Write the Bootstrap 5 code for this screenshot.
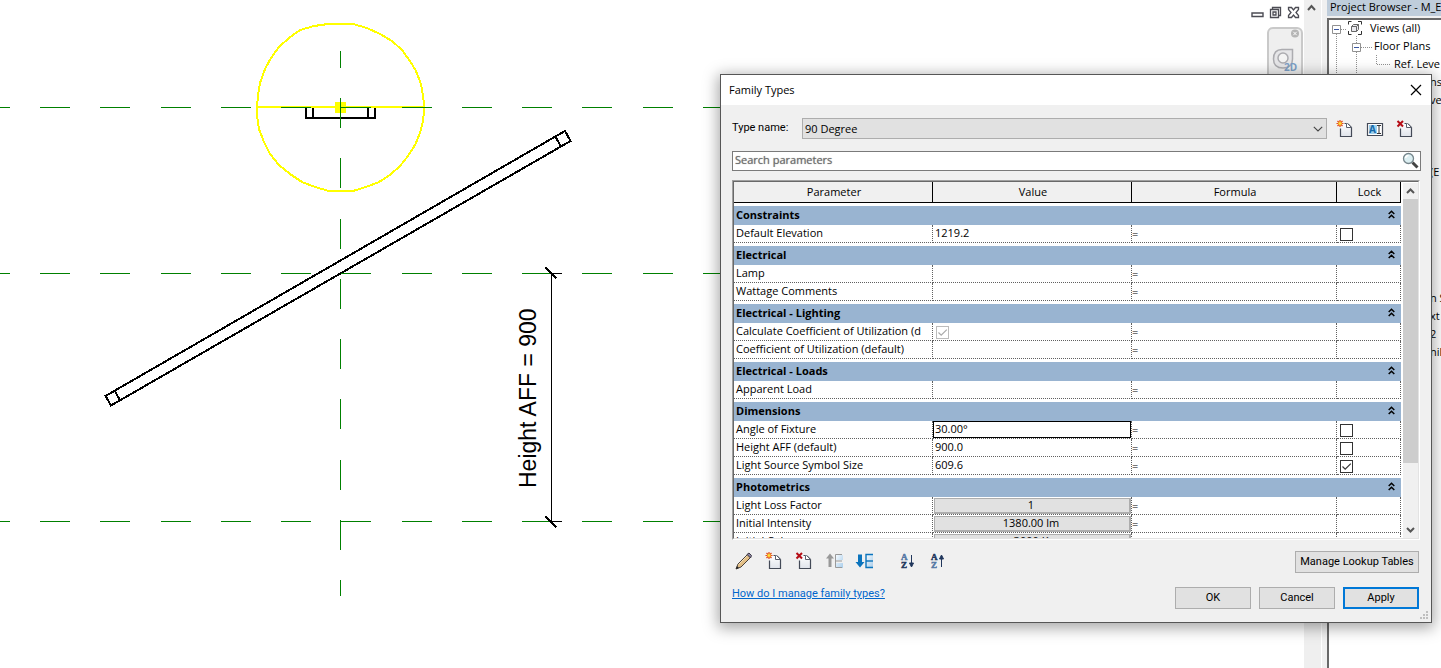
<!DOCTYPE html>
<html lang="en">
<head>
<meta charset="utf-8">
<meta name="viewport" content="width=device-width, initial-scale=1">
<title>Family Types</title>
<link href="https://cdn.jsdelivr.net/npm/bootstrap@5.3.0/dist/css/bootstrap.min.css" rel="stylesheet">
<style>
  body { font-family: "Open Sans", "Noto Sans", sans-serif; font-size: 11px; line-height: 16px; color: #000; background: #fff; }
  svg { display: block; }
  .canvas-tools { top: 0; right: 0; }
  .win-tools { gap: 5px; padding: 6px 4px 0 0; }
  .plain { border: 0; background: none; padding: 0; color: inherit; }
  .nav-widget { width: 36px; height: 60px; margin: 8px 1px 0 auto; border: 2px solid #c9c9c9; border-radius: 6px; background: #efefef; }
  .view-scroll { width: 17px; background: #efefef; }
  .view-scroll button { width: 15px; height: 17px; }
  .browser { width: 120px; padding-left: 5px; background: #f0f0f0; border-left: 1px solid #fff; }
  .browser h2 { font-size: 11px; line-height: 14px; height: 16px; margin: 0 0 2px 0; padding-left: 3px; background: #bfcddb; white-space: nowrap; overflow: hidden; }
  .tree { position: relative; border: 1px solid #696969; border-width: 2px 0 0 2px; background: #fff; white-space: nowrap; }
  .tree li { height: 18px; line-height: 16px; }
  .tree ul { padding: 0; margin: 0; list-style: none; }
  .l1 { padding-left: 17px; } .l2 { padding-left: 45px; } .l3 { padding-left: 65px; } .edge { padding-left: 101px; }
  .tree-lines { position: absolute; left: 0; top: 0; }

  .dlg { position: absolute; top: 74px; right: 9px; width: 712px; border: 1px solid #565656; background: #f0f0f0; box-shadow: 0 3px 14px 2px rgba(0,0,0,.35); }
  .dlg-title { height: 30px; background: #fff; padding: 0 8px; }
  .dlg-title h1 { font-size: 11px; line-height: 30px; margin: 0; }
  .dlg-body { padding: 13px 10px 13px 11px; }
  .dlg .type-row label, .dlg .push, .dlg .foot a { font-family: Roboto, "Open Sans", sans-serif; }
  .type-row label { width: 70px; line-height: 20px; }
  .type-row .form-select { width: 525px; height: 21px; padding: 0 24px 0 2px; font-size: 11px; line-height: 19px; color: #000; border: 1px solid #adadad; border-radius: 0; background-color: #e1e1e1;
    background-image: url("data:image/svg+xml,%3Csvg xmlns='http://www.w3.org/2000/svg' viewBox='0 0 10 6'%3E%3Cpath d='M.8.8 5 5 9.2.8' fill='none' stroke='%23444' stroke-width='1.1'/%3E%3C/svg%3E"); background-size: 10px 6px; background-position: right 3px center; }
  .type-icons { gap: 12px; padding-left: 9px; }
  .find { height: 20px; margin-top: 12px; border: 1px solid #7a7a7a; background: #fff; }
  .find input { border: 0; background: none; padding: 0 2px 3px; height: 18px; font-size: 11px; outline: 0; }
  .find input::placeholder { color: #6d6d6d; opacity: 1; text-shadow: 0 0 1px #8a8a8a; }

  .grid-frame { height: 360px; margin: 9px 1px 0 0; border: 1px solid; border-color: #a0a0a0 #fff #fff #a0a0a0; }
  .grid-inner { border: 1px solid; border-color: #696969 #e3e3e3 #e3e3e3 #696969; background: #fff; }
  .params { width: 667px; table-layout: fixed; border-collapse: separate; border-spacing: 0; }
  .params thead th { height: 21px; padding: 0 0 2px 2px; font-weight: 400; text-align: center; background: #f0f0f0; border-right: 1px solid #000; border-bottom: 1px solid #000; line-height: 17px; }
  .params tbody th { height: 22px; padding: 0 2px 2px; font-weight: 700; line-height: 17px; border-top: 3px solid #fff; background: #99b4d1; color: #000; }
  .params tbody th svg { float: right; margin: 4px 4px 0 0; }
  .params td { height: 18px; padding: 0 2px; line-height: 16px; border-bottom: 1px dotted #606060; border-right: 1px dotted #606060; white-space: nowrap; overflow: hidden; vertical-align: top; }
  .params td:first-child { padding-right: 0; }
  .params td:last-child { padding: 3px 0 0 3px; }
  .params td:nth-child(3) { padding: 1px 0 0 0; }
  .params td.pad-btn { padding: 1px 0 0 1px; }
  .params td.pad-edit { padding: 0; }
  .value-btn { width: 197px; height: 16px; font-size: 11px; line-height: 12px; background: #e1e1e1; border: 1px solid #adadad; border-width: 1px 2px 2px 1px; padding: 0 2px 1px 0; }
  .value-edit { width: 198px; height: 17px; font-size: 11px; border: 1px solid #000; padding: 0 1px 2px; outline: 0; }
  .tick { appearance: none; display: block; width: 13px; height: 13px; margin: 0; border: 1px solid #333; background: #fff; }
  .tick:checked { background: url("data:image/svg+xml,%3Csvg xmlns='http://www.w3.org/2000/svg' viewBox='0 0 11 11'%3E%3Cpath d='M1.5 5.5 4.2 8.2 9.8 2.6' fill='none' stroke='%23333' stroke-width='1.2'/%3E%3C/svg%3E") #fff; }
  .tick:disabled { border-color: #bcbcbc; margin: 3px 0 0 1px; opacity: 1; }
  .tick:disabled:checked { background-image: url("data:image/svg+xml,%3Csvg xmlns='http://www.w3.org/2000/svg' viewBox='0 0 11 11'%3E%3Cpath d='M1.5 5.5 4.2 8.2 9.8 2.6' fill='none' stroke='%23aaa' stroke-width='1.2'/%3E%3C/svg%3E"); }
  .scroller { width: 15px; background: #f0f0f0; margin-top: 1px; }
  .scroller .thumb { height: 264px; width: 15px; background: #cdcdcd; }
  .scroller button { height: 16px; width: 15px; }

  .tools { gap: 10px; height: 22px; margin: 11px 2px 0 2px; }
  .dlg .push { font-size: 11px; line-height: 20px; height: 22px; width: 76px; padding: 0; border: 1px solid #adadad; border-radius: 0; background: #e1e1e1; color: #000; }
  .dlg .push.wide { width: 124px; }
  .dlg .push.default { border: 2px solid #0078d7; line-height: 18px; }
  .foot { margin: 14px 2px 0 0; gap: 8px; }
  .foot a { color: #0066cc; line-height: 13px; align-self: flex-start; }
  .grip { position: absolute; right: 2px; bottom: 2px; }
</style>
</head>
<body>
<svg width="0" height="0" class="position-absolute" aria-hidden="true">
  <defs>
    <linearGradient id="paper" x1="0" y1="0" x2="0" y2="1"><stop offset="0" stop-color="#fff"/><stop offset="1" stop-color="#dfe3ea"/></linearGradient>
    <linearGradient id="cell" x1="0" y1="0" x2="1" y2="1"><stop offset="0" stop-color="#f4faff"/><stop offset="1" stop-color="#a9cdea"/></linearGradient>
    <symbol id="page" viewBox="0 0 18 18"><path d="M4.500 8V16.500H15.500V7.500L12 3.500H8" fill="url(#paper)"/><path d="M4.500 8.500V16.500H15.500V7.500L12 4M8.500 3.500H10.500" fill="none" stroke="#444a57" stroke-width="1.200"/><path d="M10.500 3.500V7.500H15.500L11.500 3.500Z" fill="#fff" stroke="#5a606c"/></symbol>
    <symbol id="new" viewBox="0 0 18 18"><use href="#page" width="18" height="18"/><path d="M4 0V7M.5 3.500H7.500M1.500 1 6.500 6M6.500 1 1.500 6" stroke="#e0431b" stroke-width="1.200"/><circle cx="4" cy="3.500" r="1.800" fill="#ffdf3a" stroke="#f08a1d" stroke-width=".8"/></symbol>
    <symbol id="del" viewBox="0 0 18 18"><use href="#page" width="18" height="18"/><path d="M1.500 1 7 6.500M7 1 1.500 6.500" stroke="#b50d16" stroke-width="2"/></symbol>
    <symbol id="chev2" viewBox="0 0 7 9"><path d="M.7 4 3.500 1.200 6.300 4M.7 8 3.500 5.200 6.300 8" fill="none" stroke="#000" stroke-width="1.500"/></symbol>
  </defs>
</svg>

<main class="position-relative vh-100 overflow-hidden d-flex">
  <section class="position-relative flex-grow-1" aria-label="Elevation view">
    <svg width="100%" height="100%" shape-rendering="crispEdges">
      <g fill="none" stroke="#000" stroke-width="2">
        <path d="M306 108V118H375V108M313 108V118M368 108V118"/>
        <path d="M565 131 570.500 141 111 405.500 105.500 396ZM555.500 137 561 146.500M115 391 120 400.500"/>
      </g>
      <g fill="none" stroke="#ff0" stroke-width="2">
        <path d="M424.500 107 423 121 420 133 415 145 408 156 400 166 390 175 379 182 366 187 353 191H329L315 187 302 182 290 174 279 165 270 154 264 142 259 129 257 115 257 107 258 95 260 83 265 69 271 58 279 47 289 38 300 30 314 26 328 24H353L367 28 380 34 392 41 402 50 410 61 416 71 421 84 423 96Z"/>
        <path d="M256 107H425"/>
      </g>
      <path d="M335 102H346V113H335Z" fill="#ff0"/>
      <g fill="none" stroke="#008000" stroke-dasharray="30 30.250">
        <path d="M-20.250 107.500H760M-20.250 273.500H760M-20.250 521.500H760"/>
        <path d="M340.500 37.750V596"/>
      </g>
      <path d="M340 30H341V51H340Z" fill="#fff"/>
      <g fill="none" stroke="#000">
        <path d="M551.500 273V521M551 273.500H562M551 521.500H562"/>
        <path d="M545.500 267.500 556.500 278.500M545.500 516.500 556.500 527.500" stroke-width="2"/>
      </g>
      <text transform="translate(536 486) rotate(-90)" x="-2" font-family="Liberation Sans, Arial, sans-serif" font-size="23">Height AFF = 900</text>
    </svg>
    <div class="position-absolute canvas-tools">
      <div class="d-flex win-tools">
        <button class="plain" aria-label="Minimize"><svg width="13" height="13" fill="none" stroke="#4c4c54" stroke-width="1.400"><path d="M1 7H12V10.500H1Z"/></svg></button>
        <button class="plain" aria-label="Restore"><svg width="13" height="13" fill="none" stroke="#4c4c54" stroke-width="1.300"><path d="M3.500 3V1.500H11.500V9.500H10M1.500 3.500H9.500V11.500H1.500ZM4 6H7V9H4Z"/></svg></button>
        <button class="plain" aria-label="Close view"><svg width="13" height="13" fill="#fff" stroke="#4c4c54" stroke-width="1.300"><path d="M1.500 1.500H4.500L6.500 4 8.500 1.500H11.500V3.500L9 6.500 11.500 9.500V11.500H8.500L6.500 9 4.500 11.500H1.500V9.500L4 6.500 1.500 3.500Z"/></svg></button>
      </div>
      <div class="nav-widget">
        <svg width="32" height="48" fill="none">
          <circle cx="26" cy="4.500" r="4" fill="#b5b5b5"/><path d="M24.300 2.800 27.700 6.200M27.700 2.800 24.300 6.200" stroke="#fff"/>
          <path d="M13 20.500H23.500V30Q23.500 39 14 39Q4.500 39 4.500 30Q4.500 20.500 13 20.500Z" fill="#e6e6e8" stroke="#acacb0" stroke-width="1.500"/>
          <circle cx="14" cy="29" r="5" fill="#f4f4f4" stroke="#acacb0" stroke-width="1.500"/>
          <text x="15" y="42" font-family="Open Sans, sans-serif" font-size="10" font-weight="700" fill="#7d9fc6">2D</text>
        </svg>
      </div>
    </div>
  </section>

  <div class="view-scroll">
    <button class="plain d-flex justify-content-center pt-1" aria-label="Scroll up"><svg width="9" height="8"><path d="M1 6 4.500 2 8 6" fill="none" stroke="#555" stroke-width="2"/></svg></button>
  </div>

  <aside class="browser d-flex flex-column">
    <h2>Project Browser - M_E</h2>
    <div class="tree flex-grow-1">
      <svg class="tree-lines" width="64" height="60" fill="none">
        <path d="M7.500 14V60M12 9.500H18M27.500 16V60M32 27.500H43M47.500 35V44.500H62" stroke="#909090" stroke-dasharray="1 1"/>
        <path d="M3.500 5.500H11.500V13.500H3.500ZM23.500 23.500H31.500V31.500H23.500Z" fill="#fff" stroke="#919191"/>
        <path d="M5 9.500H10M25 27.500H30" stroke="#3a56a0"/>
      </svg>
      <ul>
        <li class="l1 d-flex"><svg width="24" height="16" fill="none" stroke="#333"><path d="M5.500 1.500H2.500V4.500M12 1.500H15.500V4.500M2.500 11V14.500H5.500M15.500 11V14.500H12"/><path d="M5.500 6.500 7.500 4.500H12.500V9.500L10.500 11.500H5.500ZM5.500 6.500H10.500V11.500M10.500 6.500 12.500 4.500" fill="#e9e9ee" stroke="#666"/></svg>Views (all)</li>
        <li class="l2">Floor Plans</li>
        <li class="l3">Ref. Leve</li>
        <li class="edge">ns</li>
        <li class="edge">ve</li>
        <li></li><li></li><li></li>
        <li class="edge">(E</li>
        <li></li><li></li><li></li><li></li><li></li><li></li>
        <li class="edge">n S</li>
        <li class="edge">xt</li>
        <li class="edge">2</li>
        <li class="edge">nil</li>
      </ul>
    </div>
  </aside>

  <div class="dlg" role="dialog" aria-labelledby="dlgTitle">
    <div class="dlg-title d-flex justify-content-between align-items-center">
      <h1 id="dlgTitle">Family Types</h1>
      <button class="plain" aria-label="Close"><svg width="14" height="14"><path d="M2 2 12 12M12 2 2 12" stroke="#000" stroke-width="1.200"/></svg></button>
    </div>
    <div class="dlg-body">
      <div class="type-row d-flex">
        <label for="typeName">Type name:</label>
        <select id="typeName" class="form-select"><option>90 Degree</option></select>
        <div class="type-icons d-flex align-items-center">
          <button class="plain" aria-label="New type"><svg width="18" height="18"><use href="#new"/></svg></button>
          <button class="plain" aria-label="Rename type"><svg width="18" height="18"><path d="M1.500 3.500H16.500V15.500H1.500Z" fill="#fff" stroke="#444a57" stroke-width="1.200"/><path d="M3 5H11V14H3Z" fill="#9fd0ee"/><text x="3" y="13" font-family="Open Sans, sans-serif" font-size="10" font-weight="700" fill="#1569a8">A</text><path d="M11 5.500H15M11 13.500H15M13 5.500V13.500" stroke="#333"/></svg></button>
          <button class="plain" aria-label="Delete type"><svg width="18" height="18"><use href="#del"/></svg></button>
        </div>
      </div>

      <div class="find d-flex align-items-center">
        <input type="text" class="flex-grow-1" placeholder="Search parameters" aria-label="Search parameters">
        <button class="plain" aria-label="Search"><svg width="18" height="18" fill="none"><path d="M10.500 10.500 15.500 15.500" stroke="#444" stroke-width="3"/><circle cx="6.500" cy="6.500" r="5" fill="#dceff2" stroke="#76868c" stroke-width="1.300"/><path d="M3.500 6Q4 3.500 6.500 3.500" stroke="#fff" stroke-width="1.500"/></svg></button>
      </div>

      <div class="grid-frame">
        <div class="grid-inner h-100 d-flex justify-content-between overflow-hidden">
          <div class="overflow-hidden">
          <table class="params">
            <colgroup><col style="width:199px"><col style="width:199px"><col style="width:205px"><col style="width:64px"></colgroup>
            <thead><tr><th>Parameter</th><th>Value</th><th>Formula</th><th>Lock</th></tr></thead>
            <tbody>
              <tr><th colspan="4">Constraints<svg width="7" height="9"><use href="#chev2"/></svg></th></tr>
              <tr><td>Default Elevation</td><td>1219.2</td><td>=</td><td><input type="checkbox" class="tick" aria-label="Lock Default Elevation"></td></tr>
            </tbody>
            <tbody>
              <tr><th colspan="4">Electrical<svg width="7" height="9"><use href="#chev2"/></svg></th></tr>
              <tr><td>Lamp</td><td></td><td>=</td><td></td></tr>
              <tr><td>Wattage Comments</td><td></td><td>=</td><td></td></tr>
            </tbody>
            <tbody>
              <tr><th colspan="4">Electrical - Lighting<svg width="7" height="9"><use href="#chev2"/></svg></th></tr>
              <tr><td>Calculate Coefficient of Utilization (d</td><td><input type="checkbox" class="tick" checked disabled aria-label="Calculate Coefficient of Utilization"></td><td>=</td><td></td></tr>
              <tr><td>Coefficient of Utilization (default)</td><td></td><td>=</td><td></td></tr>
            </tbody>
            <tbody>
              <tr><th colspan="4">Electrical - Loads<svg width="7" height="9"><use href="#chev2"/></svg></th></tr>
              <tr><td>Apparent Load</td><td></td><td>=</td><td></td></tr>
            </tbody>
            <tbody>
              <tr><th colspan="4">Dimensions<svg width="7" height="9"><use href="#chev2"/></svg></th></tr>
              <tr><td>Angle of Fixture</td><td class="pad-edit"><input type="text" class="value-edit d-block" value="30.00°" aria-label="Angle of Fixture"></td><td>=</td><td><input type="checkbox" class="tick" aria-label="Lock Angle of Fixture"></td></tr>
              <tr><td>Height AFF (default)</td><td>900.0</td><td>=</td><td><input type="checkbox" class="tick" aria-label="Lock Height AFF"></td></tr>
              <tr><td>Light Source Symbol Size</td><td>609.6</td><td>=</td><td><input type="checkbox" class="tick" checked aria-label="Lock Light Source Symbol Size"></td></tr>
            </tbody>
            <tbody>
              <tr><th colspan="4">Photometrics<svg width="7" height="9"><use href="#chev2"/></svg></th></tr>
              <tr><td>Light Loss Factor</td><td class="pad-btn"><button class="value-btn d-block">1</button></td><td>=</td><td></td></tr>
              <tr><td>Initial Intensity</td><td class="pad-btn"><button class="value-btn d-block">1380.00 lm</button></td><td>=</td><td></td></tr>
              <tr><td>Initial Color</td><td class="pad-btn"><button class="value-btn d-block">3000 K</button></td><td>=</td><td></td></tr>
            </tbody>
          </table>
          </div>
          <div class="scroller d-flex flex-column">
            <button class="plain d-flex justify-content-center align-items-center" aria-label="Scroll up"><svg width="9" height="8"><path d="M1 6 4.500 2.500 8 6" fill="none" stroke="#555" stroke-width="2"/></svg></button>
            <div class="thumb"></div>
            <button class="plain d-flex justify-content-center align-items-center mt-auto" aria-label="Scroll down"><svg width="9" height="8"><path d="M1 2 4.500 5.500 8 2" fill="none" stroke="#555" stroke-width="2"/></svg></button>
          </div>
        </div>
      </div>

      <div class="tools d-flex align-items-center">
        <button class="plain" aria-label="Edit parameter"><svg width="20" height="20"><path d="M2 17 4 12 13.500 2.500 16.500 5.500 7 15Z" fill="#e3bf86" stroke="#4a4038"/><path d="M4.500 12.500 13.500 3.500" stroke="#f7e2b8"/><path d="M13 2.500 15 1 17.500 3.500 16.500 6Z" fill="#8d86a5" stroke="#3c3844"/><path d="M2 17 3 14 5 16Z" fill="#222"/></svg></button>
        <button class="plain" aria-label="New parameter"><svg width="20" height="20" viewBox="-1 0 20 20"><use href="#new" width="18" height="18"/></svg></button>
        <button class="plain" aria-label="Delete parameter"><svg width="20" height="20" viewBox="-1 0 20 20"><use href="#del" width="18" height="18"/></svg></button>
        <button class="plain" aria-label="Move up"><svg width="20" height="20"><path d="M12 3H19V8H12ZM12 11H19V16H12Z" fill="url(#cell)"/><path d="M18 2.500H11.500V15.500H18M11.500 9H18" fill="none" stroke="#999"/><path d="M6 1.500 10 6.500H7.500V15H4.500V6.500H2Z" fill="#999"/></svg></button>
        <button class="plain" aria-label="Move down"><svg width="20" height="20"><path d="M12 3H19V8H12ZM12 10H19V15H12Z" fill="url(#cell)"/><path d="M19 2.500H12V15.500H19M12 9H19" fill="none" stroke="#0b74bd" stroke-width="1.400"/><path d="M6 15.500 1.500 10H4V2.500H8V10H10.500Z" fill="#0b74bd"/></svg></button>
        <button class="plain ms-3" aria-label="Sort ascending"><svg width="20" height="20" font-family="Liberation Serif, serif" font-weight="700" font-size="9"><text x="1" y="8" fill="#5578a4" stroke="#5578a4" stroke-width=".5">A</text><text x="1" y="16" fill="#21375c" stroke="#21375c" stroke-width=".5">Z</text><path d="M11.500 3V11M9.500 11H13.500L11.500 15Z" fill="#21375c" stroke="#21375c" stroke-width="1"/></svg></button>
        <button class="plain" aria-label="Sort descending"><svg width="20" height="20" font-family="Liberation Serif, serif" font-weight="700" font-size="9"><text x="1" y="8" fill="#21375c" stroke="#21375c" stroke-width=".5">A</text><text x="1" y="16" fill="#5578a4" stroke="#5578a4" stroke-width=".5">Z</text><path d="M11.500 15V7M9.500 7H13.500L11.500 3Z" fill="#21375c" stroke="#21375c" stroke-width="1"/></svg></button>
        <button class="btn push wide ms-auto">Manage Lookup Tables</button>
      </div>

      <div class="foot d-flex">
        <a href="#" class="me-auto">How do I manage family types?</a>
        <button class="btn push">OK</button>
        <button class="btn push">Cancel</button>
        <button class="btn push default">Apply</button>
      </div>
    </div>
    <svg class="grip" width="9" height="9" fill="#bfbfbf"><path d="M6 0H8V2H6ZM3 3H5V5H3ZM6 3H8V5H6ZM0 6H2V8H0ZM3 6H5V8H3ZM6 6H8V8H6Z"/></svg>
  </div>
</main>
<script src="https://cdn.jsdelivr.net/npm/bootstrap@5.3.0/dist/js/bootstrap.bundle.min.js"></script>
</body>
</html>
